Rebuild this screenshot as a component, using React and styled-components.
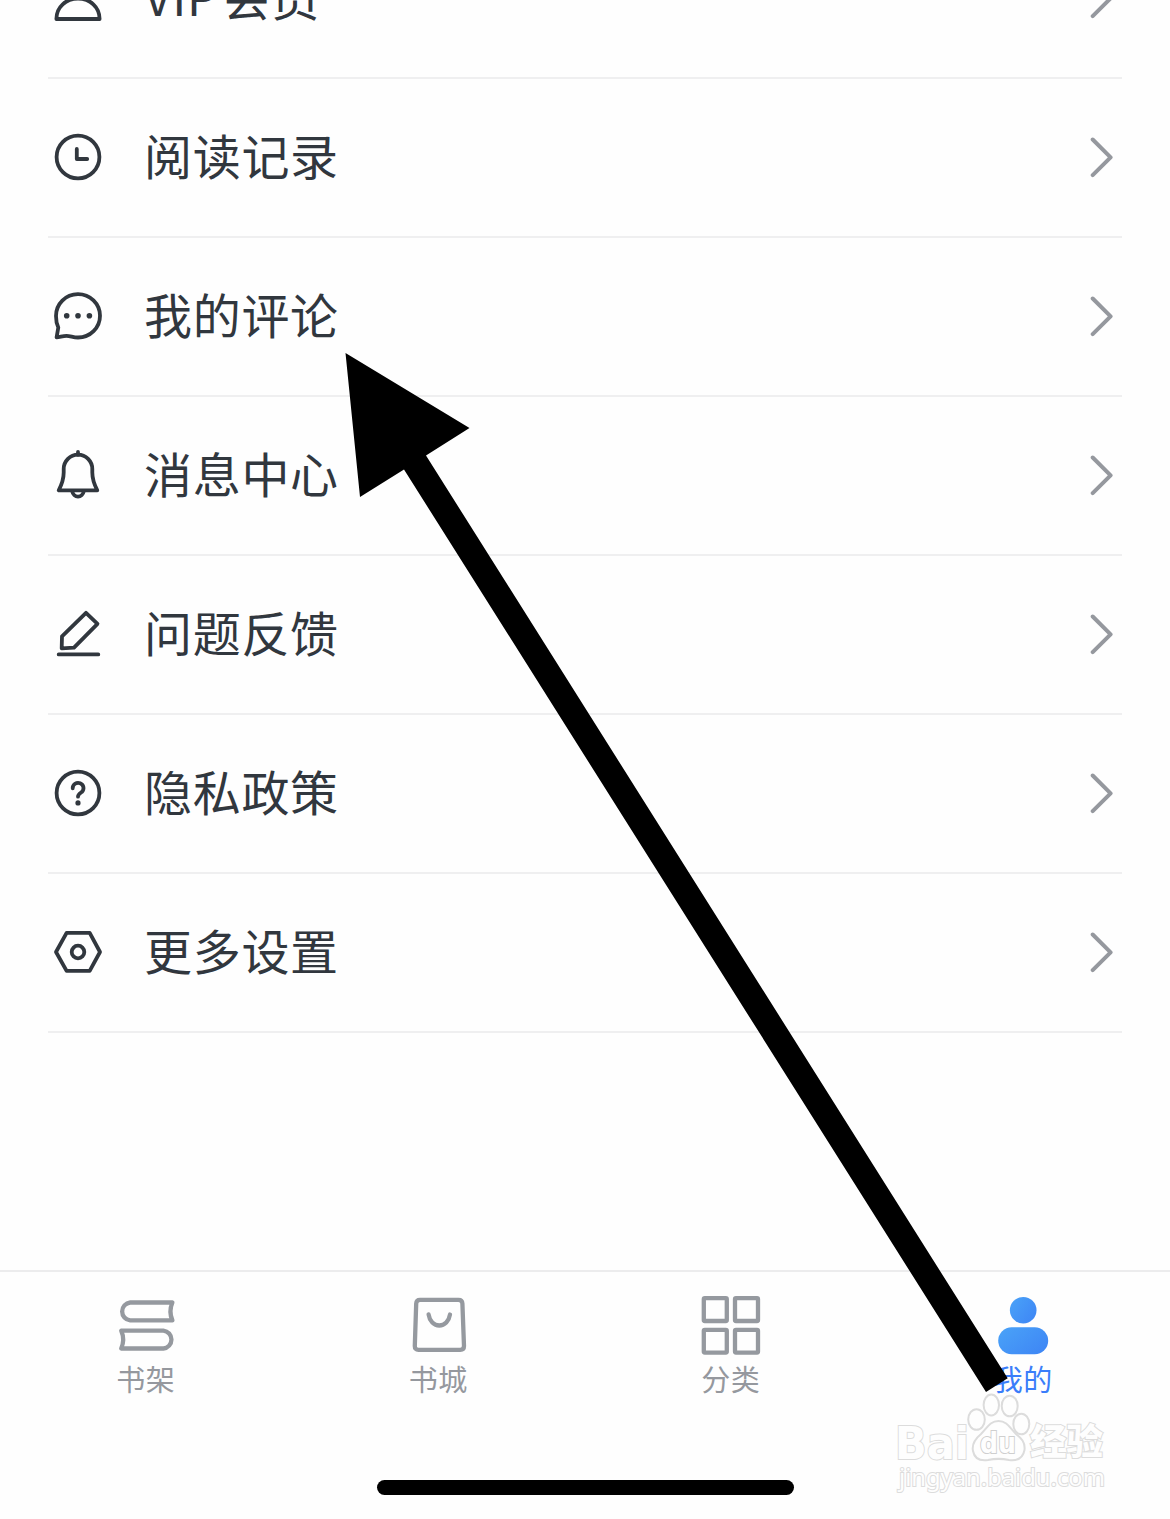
import React, { useState } from 'react';
import styled, { createGlobalStyle } from 'styled-components';

const GlobalStyle = createGlobalStyle`
  body {
    margin: 0;
    background: #fefefe;
    font-family: 'Noto Sans CJK SC', 'Noto Sans', sans-serif;
  }
`;

const Page = styled.div`
  position: relative;
  display: flex;
  flex-direction: column;
  width: 1170px;
  height: 1519px;
  overflow: hidden;
  background: #fefefe;
`;

/* the list is scrolled, its first row is cut by the top edge */
const Menu = styled.div`
  flex: 1;
  margin-top: -80px;
  padding: 0 48px;
`;

const MenuRow = styled.div`
  display: flex;
  align-items: center;
  box-sizing: border-box;
  height: 159px;
  padding: 0 8px 0 3px;
  border-bottom: 2px solid #efeff0;
  cursor: pointer;
`;

const MenuIcon = styled.svg`
  width: 54px;
  height: 55px;
  fill: none;
  stroke: #31373e;
  stroke-width: 3.8;
  stroke-linecap: round;
  stroke-linejoin: round;
`;

const MenuLabel = styled.span`
  flex: 1;
  margin-left: 39px;
  padding-bottom: 7px;
  color: #31373e;
  font-size: 48px;
  line-height: 72px;
  letter-spacing: 0.7px;
  word-spacing: -7px;
`;

const Chevron = styled.svg`
  width: 24px;
  height: 41px;
  fill: none;
  stroke: #95989e;
  stroke-width: 4;
  stroke-linecap: round;
  stroke-linejoin: round;
`;

const TabBar = styled.div`
  display: flex;
  box-sizing: border-box;
  height: 210px;
  padding-top: 23px;
  border-top: 2px solid #ececed;
`;

const Tab = styled.div`
  flex: 1;
  display: flex;
  flex-direction: column;
  align-items: center;
  color: ${(props) => (props.$active ? '#3a7dfa' : '#95989e')};
  cursor: pointer;
`;

const TabIcon = styled.svg`
  width: 60px;
  height: 60px;
  fill: none;
  stroke: #95999f;
  stroke-width: 4.3;
`;

const TabLabel = styled.span`
  margin: 1px 1px 0 0;
  font-size: 29px;
  line-height: 44px;
  letter-spacing: 0.5px;
`;

const HomeIndicator = styled.div`
  width: 417px;
  height: 15px;
  margin: 0 auto 24px 377px;
  border-radius: 8px;
  background: #000;
`;

const Overlay = styled.svg`
  position: absolute;
  top: 0;
  left: 0;
  width: 1170px;
  height: 1519px;
  pointer-events: none;
`;

const MarkText = styled.text`
  font-family: ${(props) => props.$font};
  font-size: ${(props) => props.$size}px;
  font-weight: ${(props) => props.$weight || 400};
  paint-order: stroke;
`;

const items = [
  {
    label: 'VIP 会员',
    icon: <path d="M5.4 48C5.4 36 15 27.6 27 27.6S48.6 36 48.6 48Z" />,
  },
  {
    label: '阅读记录',
    icon: (
      <>
        <circle cx="27" cy="27" r="21.4" />
        <path d="M25.8 19v10h10.4" />
      </>
    ),
  },
  {
    label: '我的评论',
    icon: (
      <>
        <path d="M5.6 48.4L7.3 38.5C5.6 35 5 31.5 5 27A22 21.7 0 1 1 27 48.5C22 48.5 19.5 46.8 15.5 46.8S9 48.2 5.6 48.4Z" />
        <g fill="#31373e" stroke="none">
          <circle cx="15.7" cy="26.8" r="2.8" />
          <circle cx="27" cy="26.8" r="2.8" />
          <circle cx="38.4" cy="26.8" r="2.8" />
        </g>
      </>
    ),
  },
  {
    label: '消息中心',
    icon: (
      <>
        <path d="M27 4v3M7.7 42.3H46.3C43 36 41.3 31.5 41.3 24.5V21A14.3 14.3 0 0 0 12.7 21V24.5C12.7 31.5 11 36 7.7 42.3Z" />
        <path d="M21.3 43.5A5.8 6.2 0 0 0 32.7 43.5" />
      </>
    ),
  },
  {
    label: '问题反馈',
    icon: (
      <path d="M35 5.8L46.5 16.8L23 40.7L10.7 41.3L11 29.3ZM7.7 47.4H47.3" />
    ),
  },
  {
    label: '隐私政策',
    icon: (
      <>
        <circle cx="27" cy="27" r="21.4" />
        <path d="M21.7 22.3A5.4 5.3 0 1 1 30.8 26C28.5 27.7 27 28.3 27 30.7" />
        <circle cx="27" cy="36.9" r="2.6" fill="#31373e" stroke="none" />
      </>
    ),
  },
  {
    label: '更多设置',
    icon: (
      <>
        <path d="M15.6 7.8H38.7L49 27L38.7 45.9H15.6L5 27Z" />
        <circle cx="27" cy="27" r="6.3" />
      </>
    ),
  },
];

const tabs = [
  {
    label: '书架',
    icon: (
      <g strokeLinejoin="round">
        <path d="M56.4 7.5H14.2A9 9 0 0 0 14.2 25.4H56.4C54 20 54 13 56.4 7.5Z" />
        <path d="M5.2 35.6H47.4A9 9 0 0 1 47.4 53.5H5.2C7.6 48 7.6 41 5.2 35.6Z" />
      </g>
    ),
  },
  {
    label: '书城',
    icon: (
      <>
        <path d="M11 4.8H49.5Q53.2 4.8 53.4 8.5L55 51Q55 54.8 51.3 54.8H9.5Q5.7 54.8 5.8 51L7.2 8.5Q7.4 4.8 11 4.8Z" />
        <path d="M19.6 19.5C20.5 26 25 30.5 30.3 30.5S40 26 41 19.5" strokeLinecap="round" />
      </>
    ),
  },
  {
    label: '分类',
    icon: (
      <>
        <rect x="2.8" y="3.2" width="23" height="22.8" rx="1" />
        <rect x="34" y="3.2" width="23" height="22.8" rx="1" />
        <rect x="2.8" y="34.8" width="23" height="22.8" rx="1" />
        <rect x="34" y="34.8" width="23" height="22.8" rx="1" />
      </>
    ),
  },
  {
    label: '我的',
    icon: (
      <>
        <defs>
          <linearGradient id="mine" x1="0" y1="0" x2="1" y2="0.7">
            <stop offset="0" stopColor="#4aa3f8" />
            <stop offset="1" stopColor="#3f88f5" />
          </linearGradient>
        </defs>
        <circle cx="29.2" cy="15.2" r="13.3" fill="url(#mine)" stroke="none" />
        <rect x="4.2" y="32.2" width="50" height="27" rx="13.5" fill="url(#mine)" stroke="none" />
      </>
    ),
  },
];

const App = () => {
  const [active, setActive] = useState('我的');

  return (
    <Page>
      <GlobalStyle />
      <Menu>
        {items.map((item) => (
          <MenuRow key={item.label}>
            <MenuIcon viewBox="0 0 54 55">{item.icon}</MenuIcon>
            <MenuLabel>{item.label}</MenuLabel>
            <Chevron viewBox="0 0 24 41">
              <path d="M2.7 2.5L20.6 20.3L2.7 38.1" />
            </Chevron>
          </MenuRow>
        ))}
      </Menu>

      <TabBar>
        {tabs.map((tab) => (
          <Tab key={tab.label} $active={tab.label === active} onClick={() => setActive(tab.label)}>
            <TabIcon viewBox="0 0 60 60">{tab.icon}</TabIcon>
            <TabLabel>{tab.label}</TabLabel>
          </Tab>
        ))}
      </TabBar>
      <HomeIndicator />

      <Overlay viewBox="0 0 1170 1519">
        <polygon points="345.5,353 469.5,428 426,455.5 1007.7,1378.3 986,1392 404,469.5 360,497" />
        <g fill="#fefefe" stroke="#dcdcdc" strokeWidth="2">
          <MarkText x="895" y="1458.5" textLength="74" lengthAdjust="spacingAndGlyphs" $font="'DejaVu Sans', sans-serif" $size={45} $weight={700}>Bai</MarkText>
          <ellipse cx="976.5" cy="1419.5" rx="8.3" ry="10.3" />
          <ellipse cx="991.3" cy="1405" rx="7.7" ry="10.5" />
          <ellipse cx="1009.7" cy="1406" rx="8" ry="10.3" />
          <ellipse cx="1021.3" cy="1424" rx="8" ry="10.3" />
          <path d="M998.5 1421C990 1421 987 1428 981 1434C975 1439 971.5 1444 973 1451C974.5 1459 981 1461 988 1460C995 1458.5 1002 1458.5 1009 1460C1017 1461 1023 1458 1024.5 1450C1025.5 1442 1021 1438 1016 1434C1010 1428 1007 1421 998.5 1421Z" />
          <MarkText x="980" y="1453" textLength="36" lengthAdjust="spacingAndGlyphs" $font="'DejaVu Sans', sans-serif" $size={28} $weight={700} stroke="#cfcfcf">du</MarkText>
          <MarkText x="1030" y="1455" textLength="73" lengthAdjust="spacingAndGlyphs" $font="'Noto Sans CJK SC', sans-serif" $size={36} $weight={900}>经验</MarkText>
          <MarkText x="899" y="1486" textLength="206" lengthAdjust="spacingAndGlyphs" $font="'Noto Sans', sans-serif" $size={24}>jingyan.baidu.com</MarkText>
        </g>
      </Overlay>
    </Page>
  );
};

export default App;
